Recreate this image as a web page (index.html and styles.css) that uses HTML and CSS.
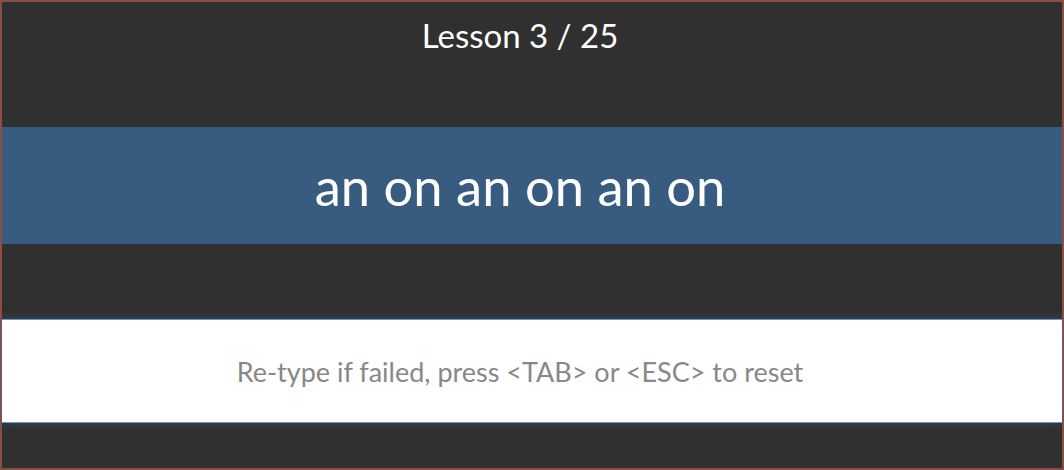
FILE: index.html
```html
<!DOCTYPE html>
<html lang="en">
<head>
    <meta charset="UTF-8">
    <meta name="viewport" content="width=device-width, initial-scale=1.0">
    <title>Typing lessons</title>
    <link rel="stylesheet" href="styles.css">
</head>
<body>
    <div class="frame">
        <div class="lesson-title">Lesson 3 / 25</div>

        <div class="prompt">
            <div class="prompt-text">an on an on an on</div>
        </div>

        <div class="input-row">
            <input class="typing-input" type="text" placeholder="Re-type if failed, press <TAB> or <ESC> to reset">
        </div>
    </div>
</body>
</html>
```

FILE: styles.css
```css
* {
    margin: 0;
    padding: 0;
    box-sizing: border-box;
}

body {
    background: #303030;
    font-family: Lato, "Open Sans", sans-serif;
}

.frame {
    height: 470px;
    border: 2px solid #8b4e45;
    background: #303030;
    display: flex;
    flex-direction: column;
}

.lesson-title {
    height: 125px;
    padding: 14px 24px 0 0;
    text-align: center;
    color: #fff;
    font-size: 33px;
    line-height: 1.2;
}

.prompt {
    height: 117px;
    background: #385c80;
    display: flex;
    align-items: center;
    justify-content: center;
    padding-right: 24px;
}

.prompt-text {
    color: #fff;
    font-size: 52.5px;
}

.input-row {
    margin-top: 75px;
}

.typing-input {
    display: block;
    width: 100%;
    height: 104px;
    border: none;
    border-top: 1px solid #6b95c2;
    border-bottom: 1px solid #6b95c2;
    box-shadow: 0 0 8px rgba(70, 110, 160, 0.5);
    outline: none;
    background: #fff;
    font-family: Lato, "Open Sans", sans-serif;
    font-size: 27px;
    text-align: center;
    padding-right: 24px;
    color: #333;
}

.typing-input::placeholder {
    color: #888;
}
```
